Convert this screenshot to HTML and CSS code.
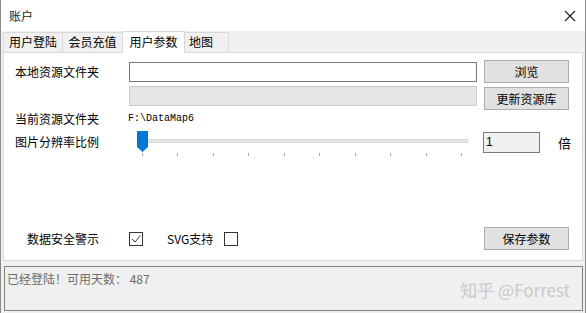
FILE: index.html
```html
<!DOCTYPE html>
<html lang="zh-CN">
<head>
    <meta charset="UTF-8">
    <title>账户</title>
    <link rel="stylesheet" href="styles.css">
</head>
<body>

    <div class="window">
        <div class="titlebar">
            <span class="title">账户</span>
            <svg class="close" width="12" height="12" viewBox="0 0 12 12">
                <path d="M1 1 L11 11 M11 1 L1 11" stroke="#1a1a1a" stroke-width="1.1" fill="none"/>
            </svg>
        </div>

        <div class="tabs">
            <div class="tab tab-1">用户登陆</div>
            <div class="tab tab-2">会员充值</div>
            <div class="tab tab-3 active">用户参数</div>
            <div class="tab tab-4">地图</div>
        </div>

        <div class="panel">
            <div class="row row-path">
                <div class="label">本地资源文件夹</div>
                <div class="input"></div>
                <button class="btn">浏览</button>
            </div>

            <div class="row row-update">
                <div class="label"></div>
                <div class="input disabled"></div>
                <button class="btn btn-update">更新资源库</button>
            </div>

            <div class="row row-current">
                <div class="label">当前资源文件夹</div>
                <div class="path-value">F:\DataMap6</div>
            </div>

            <div class="row row-scale">
                <div class="label">图片分辨率比例</div>
                <div class="slider">
                    <div class="slider-track"></div>
                    <svg class="slider-thumb" width="11" height="21" viewBox="0 0 11 21">
                        <polygon points="0,0 11,0 11,16 5.5,21 0,16" fill="#0078d7"/>
                    </svg>
                    <div class="slider-ticks">
                        <span></span><span></span><span></span><span></span><span></span>
                        <span></span><span></span><span></span><span></span><span></span>
                    </div>
                </div>
                <div class="ratio-box">1</div>
                <div class="unit">倍</div>
            </div>

            <div class="row row-options">
                <div class="option-label">数据安全警示</div>
                <svg class="check" width="14" height="14" viewBox="0 0 14 14">
                    <rect x="0.5" y="0.5" width="13" height="13" fill="#fff" stroke="#333"/>
                    <path d="M3 7 L6 10 L11.5 3.5" stroke="#333" stroke-width="1" fill="none"/>
                </svg>
                <div class="option-label svg-label">SVG支持</div>
                <svg class="check" width="14" height="14" viewBox="0 0 14 14">
                    <rect x="0.5" y="0.5" width="13" height="13" fill="#fff" stroke="#333"/>
                </svg>
                <button class="btn btn-save">保存参数</button>
            </div>
        </div>

        <div class="status">
            <div class="status-text">已经登陆！可用天数： 487</div>
            <div class="watermark">知乎 @Forrest</div>
        </div>
    </div>

</body>
</html>
```

FILE: styles.css
```css
* {
    box-sizing: border-box;
}

html, body {
    margin: 0;
    padding: 0;
    background-color: #f0f0f0;
    font-family: "Noto Sans CJK SC", "Noto Sans", sans-serif;
    font-size: 12px;
    color: #000;
}

.window {
    width: 586px;
    height: 313px;
    background-color: #f0f0f0;
    border-left: 1px solid #8a8a8a;
    border-right: 1px solid #8a8a8a;
}

/* title bar */
.titlebar {
    height: 31px;
    background-color: #fff;
    display: flex;
    align-items: center;
    justify-content: space-between;
    padding: 0 9px 0 8px;
}

.title {
    font-size: 12px;
    color: #1a1a1a;
}

.close {
    margin-top: 1px;
}

/* tabs */
.tabs {
    display: flex;
    align-items: flex-end;
    height: 21px;
    padding-left: 2px;
}

.tab {
    height: 20px;
    line-height: 18px;
    text-align: center;
    border: 1px solid #d9d9d9;
    border-bottom: none;
    margin-right: -1px;
    background-color: #f0f0f0;
}

.tab-1 { width: 60px; }
.tab-2 { width: 61px; }
.tab-3 { width: 63px; }
.tab-4 {
    width: 45px;
    text-align: left;
    padding-left: 4px;
}

.tab.active {
    height: 22px;
    line-height: 19px;
    background-color: #fff;
    position: relative;
    z-index: 2;
    margin-bottom: -1px;
}

/* tab page */
.panel {
    margin: 0 2px 0 2px;
    height: 209px;
    background-color: #fff;
    border: 1px solid #d9d9d9;
    display: flex;
    flex-direction: column;
}

.row {
    display: flex;
    align-items: center;
    padding-left: 11px;
}

.label {
    width: 114px;
    flex-shrink: 0;
}

.input {
    width: 348px;
    height: 20px;
    background-color: #fff;
    border: 1px solid #7a7a7a;
}

.input.disabled {
    background-color: #e6e6e6;
    border-color: #cccccc;
}

.btn {
    width: 85px;
    height: 23px;
    margin-left: 7px;
    padding: 0;
    font-family: inherit;
    font-size: 12px;
    color: #000;
    background-color: #e1e1e1;
    border: 1px solid #adadad;
}

.row-path {
    margin-top: 7px;
    height: 23px;
}

.row-update {
    margin-top: 3px;
    height: 24px;
    align-items: flex-start;
}

.btn-update {
    margin-top: 1px;
}

.row-current {
    height: 16px;
    margin-top: 0;
}

.path-value {
    font-family: "Liberation Mono", monospace;
    font-size: 10px;
    margin-left: -1px;
}

/* slider row */
.row-scale {
    margin-top: 5px;
    height: 26px;
    align-items: flex-start;
}

.row-scale .label {
    margin-top: 2px;
}

.slider {
    position: relative;
    width: 331px;
    height: 26px;
    margin-left: 8px;
}

.slider-track {
    position: absolute;
    left: 3px;
    right: 0;
    top: 8px;
    height: 4px;
    background-color: #e7e7e7;
    border: 1px solid #d6d6d6;
}

.slider-thumb {
    position: absolute;
    left: 0;
    top: 0;
}

.slider-ticks {
    position: absolute;
    left: 5px;
    width: 320px;
    top: 22px;
    display: flex;
    justify-content: space-between;
}

.slider-ticks span {
    width: 1px;
    height: 3px;
    background-color: #a8a8a8;
}

.ratio-box {
    width: 57px;
    height: 21px;
    margin-left: 15px;
    margin-top: 1px;
    background-color: #f0f0f0;
    border: 1px solid #7a7a7a;
    line-height: 19px;
    padding-left: 2px;
    font-family: "Liberation Sans", sans-serif;
}

.unit {
    margin-left: 18px;
    margin-top: 2px;
    font-size: 13px;
}

/* options row */
.row-options {
    margin-top: auto;
    margin-bottom: 10px;
    height: 23px;
    padding-left: 23px;
}

.option-label {
    width: 102px;
}

.svg-label {
    width: 57px;
    margin-left: 24px;
}

.check {
    flex-shrink: 0;
}

.btn-save {
    margin-left: auto;
    margin-right: 13px;
}

/* status box */
.status {
    position: relative;
    margin: 5px 2px 0 3px;
    height: 45px;
    border: 1px solid #828282;
    background-color: #f0f0f0;
    padding: 3px 0 0 2px;
}

.status-text {
    color: #6d6d6d;
    font-size: 12px;
}

.watermark {
    position: absolute;
    right: 12px;
    bottom: 8px;
    font-family: "Noto Sans CJK SC", "Noto Sans", sans-serif;
    font-size: 17px;
    color: #c9c9c9;
}
```
